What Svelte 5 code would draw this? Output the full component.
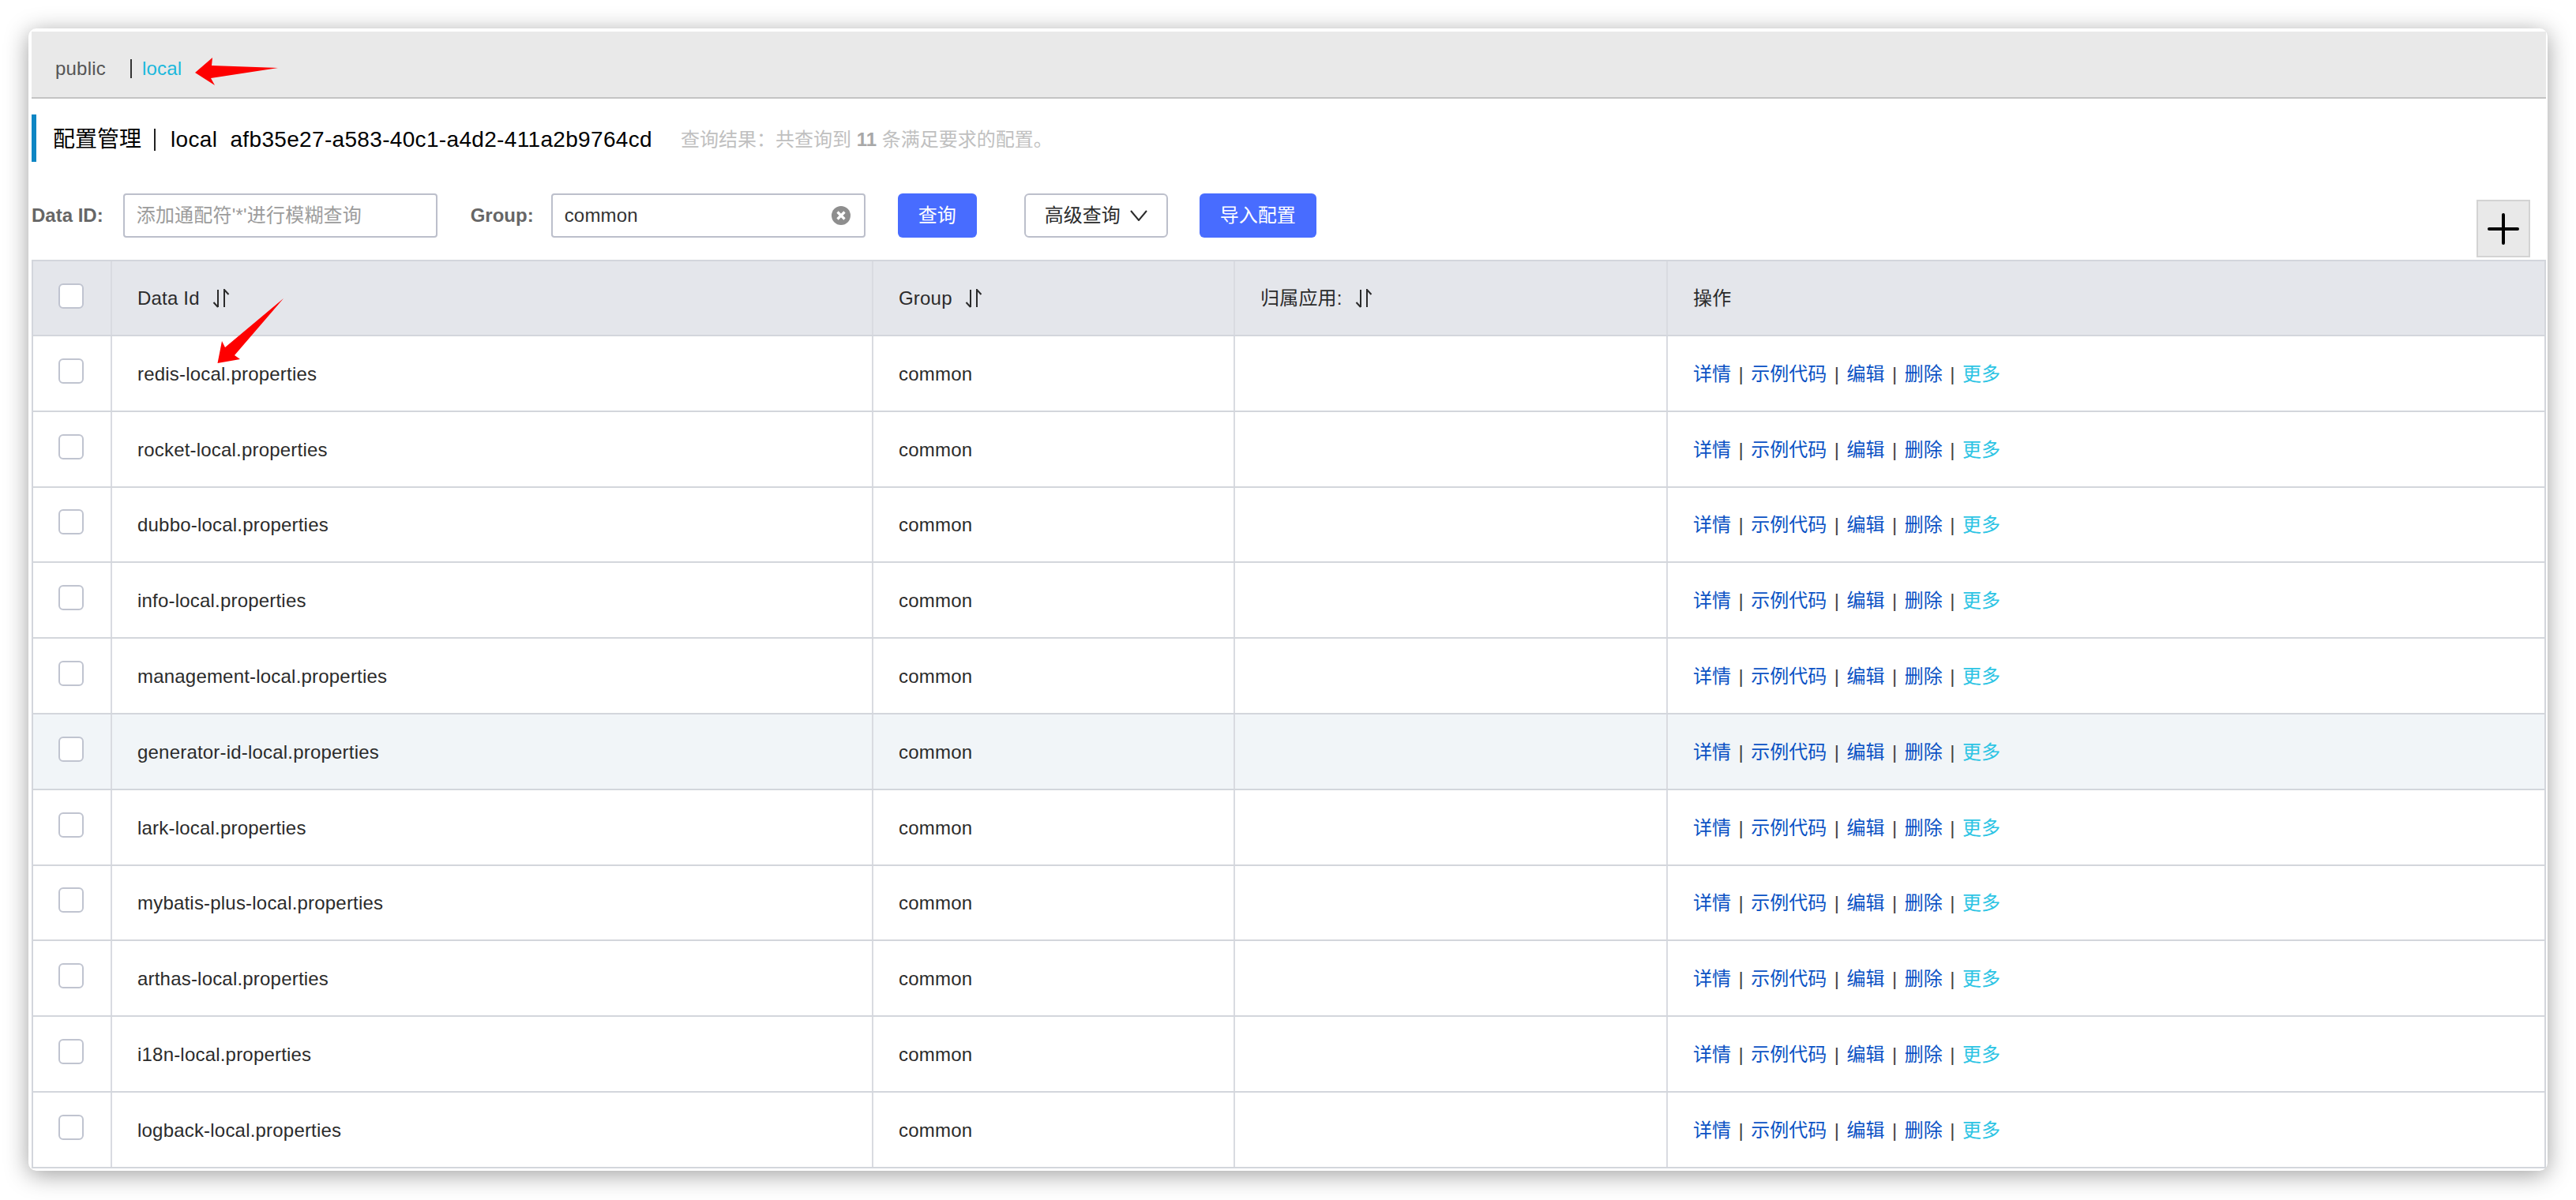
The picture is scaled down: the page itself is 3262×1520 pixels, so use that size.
<script>
	const rows = [
		'redis-local.properties',
		'rocket-local.properties',
		'dubbo-local.properties',
		'info-local.properties',
		'management-local.properties',
		'generator-id-local.properties',
		'lark-local.properties',
		'mybatis-plus-local.properties',
		'arthas-local.properties',
		'i18n-local.properties',
		'logback-local.properties'
	];
	const actions = ['详情', '示例代码', '编辑', '删除'];
	// row under the mouse in the screenshot
	const hovered = 5;
</script>

{#snippet sortIcon()}
	<svg class="sort" viewBox="0 0 22 24" width="22" height="24" aria-hidden="true">
		<path d="M7 1V23M7 23L1.5 17M15 23V1L20.5 7" fill="none" stroke="#2b2b2b" stroke-width="2" />
	</svg>
{/snippet}

<div class="page">
	<div class="window">
		<nav class="tabs">
			<span class="tab">public</span>
			<span class="tab-sep"></span>
			<span class="tab active">local</span>
		</nav>

		<div class="title">
			<h1>配置管理<span class="title-sep"></span><span class="ns">local&nbsp;&nbsp;afb35e27-a583-40c1-a4d2-411a2b9764cd</span></h1>
			<span class="hint">查询结果&#xFF1A;共查询到 <b>11</b> 条满足要求的配置。</span>
		</div>

		<div class="toolbar">
			<label class="label" for="data-id">Data ID:</label>
			<input id="data-id" class="input id-input" placeholder="添加通配符'*'进行模糊查询" />
			<label class="label group-label" for="group">Group:</label>
			<div class="group-field">
				<input id="group" class="input group-input" value="common" />
				<svg class="clear" viewBox="0 0 24 24" width="24" height="24" aria-hidden="true">
					<circle cx="12" cy="12" r="12" fill="#8e8e8e" />
					<path d="M7.5 7.5L16.5 16.5M16.5 7.5L7.5 16.5" stroke="#fff" stroke-width="3.2" />
				</svg>
			</div>
			<button class="btn primary search">查询</button>
			<button class="btn advanced">
				高级查询
				<svg viewBox="0 0 22 14" width="22" height="14" aria-hidden="true">
					<path d="M1 1L11 13L21 1" fill="none" stroke="#2b2b2b" stroke-width="2" />
				</svg>
			</button>
			<button class="btn primary import">导入配置</button>
			<button class="plus" aria-label="add">
				<svg viewBox="0 0 40 40" width="40" height="40" aria-hidden="true">
					<path d="M2 20H38M20 2V38" fill="none" stroke="#000" stroke-width="4" stroke-linecap="round" />
				</svg>
			</button>
		</div>

		<div class="table">
			<div class="row head">
				<div class="cell check"><input type="checkbox" /></div>
				<div class="cell">Data Id {@render sortIcon()}</div>
				<div class="cell">Group {@render sortIcon()}</div>
				<div class="cell">归属应用: {@render sortIcon()}</div>
				<div class="cell">操作</div>
			</div>
			{#each rows as name, i}
				<div class="row body-row" class:hover={i === hovered}>
					<div class="cell check"><input type="checkbox" /></div>
					<div class="cell">{name}</div>
					<div class="cell">common</div>
					<div class="cell"></div>
					<div class="cell ops">
						{#each actions as action}
							<a href="#top">{action}</a><span class="pipe">|</span>
						{/each}
						<a class="more" href="#top">更多</a>
					</div>
				</div>
			{/each}
		</div>

		<!-- red annotations drawn on top of the screenshot -->
		<svg class="marks" viewBox="0 0 3190 1447" aria-hidden="true">
			<polygon points="211,56 233,37 232,47 316,50 231,63 236,72" fill="#fe0000" />
			<polygon points="239.5,424 245,396 249,404 323,342 261,414 268,419" fill="#fe0000" />
		</svg>
	</div>
</div>

<style>
	:global(html),
	:global(body) {
		margin: 0;
		background: #fff;
	}

	* {
		box-sizing: border-box;
	}

	.page {
		width: 3262px;
		height: 1520px;
		padding: 36px 0 0 36px;
		overflow: hidden;
	}

	.window {
		position: relative;
		width: 3190px;
		height: 1447px;
		padding: 4px 2px 3px 4px;
		background: #fff;
		border-radius: 10px;
		box-shadow: 0 5px 30px rgba(0, 0, 0, 0.38);
		font: 24px/32px 'Liberation Sans', 'Noto Sans CJK SC', sans-serif;
		letter-spacing: 0.2px;
		color: #2b2b2b;
	}

	.tabs {
		display: flex;
		align-items: center;
		height: 85px;
		padding: 10px 0 0 30px;
		background: #e9e9e9;
		border-bottom: 2px solid #c4c4c4;
	}

	.tab {
		color: #555;
	}

	.tab.active {
		color: #1cb8dc;
	}

	.tab-sep {
		width: 2px;
		height: 24px;
		margin: 0 13px 0 31px;
		background: #333;
	}

	.title {
		display: flex;
		align-items: center;
		height: 60px;
		margin-top: 20px;
		padding: 3px 0 0 21px;
		border-left: 6px solid #0e86c4;
	}

	h1 {
		display: flex;
		align-items: center;
		margin: 0;
		font-size: 28px;
		font-weight: 400;
		letter-spacing: 0;
		color: #000;
	}

	.ns {
		letter-spacing: 0.33px;
	}

	.title-sep {
		width: 2px;
		height: 28px;
		margin: 0 19px 0 16px;
		background: #222;
	}

	.hint {
		margin-left: 36px;
		letter-spacing: 0;
		color: #c0c0c0;
	}

	.hint b {
		color: #a8a8a8;
	}

	.toolbar {
		display: flex;
		align-items: flex-start;
		height: 84px;
		margin-top: 40px;
		padding-right: 20px;
	}

	.label {
		line-height: 56px;
		font-weight: 700;
		letter-spacing: 0;
		color: #666;
	}

	.input {
		height: 56px;
		padding: 0 15px;
		border: 2px solid #bcbfcb;
		border-radius: 4px;
		font: inherit;
		letter-spacing: 0.2px;
		color: #333;
		outline: none;
	}

	.input::placeholder {
		color: #9c9c9c;
		opacity: 1;
	}

	.id-input {
		width: 398px;
		margin-left: 25px;
	}

	.group-label {
		margin-left: 42px;
	}

	.group-field {
		position: relative;
		margin-left: 22px;
	}

	.group-input {
		display: block;
		width: 398px;
	}

	.clear {
		position: absolute;
		top: 16px;
		right: 19px;
	}

	.btn {
		height: 56px;
		padding: 0;
		border: 2px solid #bcbfcb;
		border-radius: 6px;
		background: #fff;
		font: inherit;
		color: #2b2b2b;
	}

	.btn.primary {
		border: 0;
		background: #486cff;
		color: #fff;
	}

	.search {
		width: 100px;
		margin-left: 41px;
	}

	.advanced {
		display: flex;
		align-items: center;
		justify-content: center;
		gap: 12px;
		width: 182px;
		margin-left: 60px;
	}

	.import {
		width: 148px;
		margin-left: 40px;
	}

	.plus {
		display: flex;
		align-items: center;
		justify-content: center;
		align-self: flex-end;
		width: 68px;
		height: 73px;
		margin: 0 0 3px auto;
		padding: 0;
		background: #e9e9e9;
		border: 2px solid #d3d3d3;
	}

	.table {
		border-top: 2px solid #d3d6dc;
		border-left: 2px solid #d3d6dc;
	}

	.row {
		display: grid;
		grid-template-columns: 100px 964px 458px 548px 1fr;
		height: 95.8px;
		border-bottom: 2px solid #d3d6dc;
		border-right: 2px solid #d3d6dc;
	}

	.row.head {
		height: 95px;
		background: #e4e6eb;
	}

	.row.hover {
		background: #f1f5f8;
	}

	.cell {
		display: flex;
		align-items: center;
		padding-left: 32px;
		border-right: 2px solid #d9dbe1;
		white-space: pre;
	}

	.body-row .cell {
		padding-top: 2px;
	}

	.cell:last-child {
		border-right: 0;
	}

	.cell.check,
	.body-row .cell.check {
		padding: 0 2px 6px 0;
		justify-content: center;
	}

	.sort {
		margin-left: 9px;
	}

	.ops {
		letter-spacing: 0;
	}

	input[type='checkbox'] {
		appearance: none;
		width: 32px;
		height: 32px;
		margin: 0;
		background: #fff;
		border: 2px solid #c0c4d0;
		border-radius: 6px;
	}

	a {
		color: #0a52c4;
		text-decoration: none;
	}

	a.more {
		color: #2cc4e4;
	}

	.pipe {
		margin: 0 9.5px;
		color: #444;
	}

	.marks {
		position: absolute;
		inset: 0;
		width: 100%;
		height: 100%;
		pointer-events: none;
	}
</style>
